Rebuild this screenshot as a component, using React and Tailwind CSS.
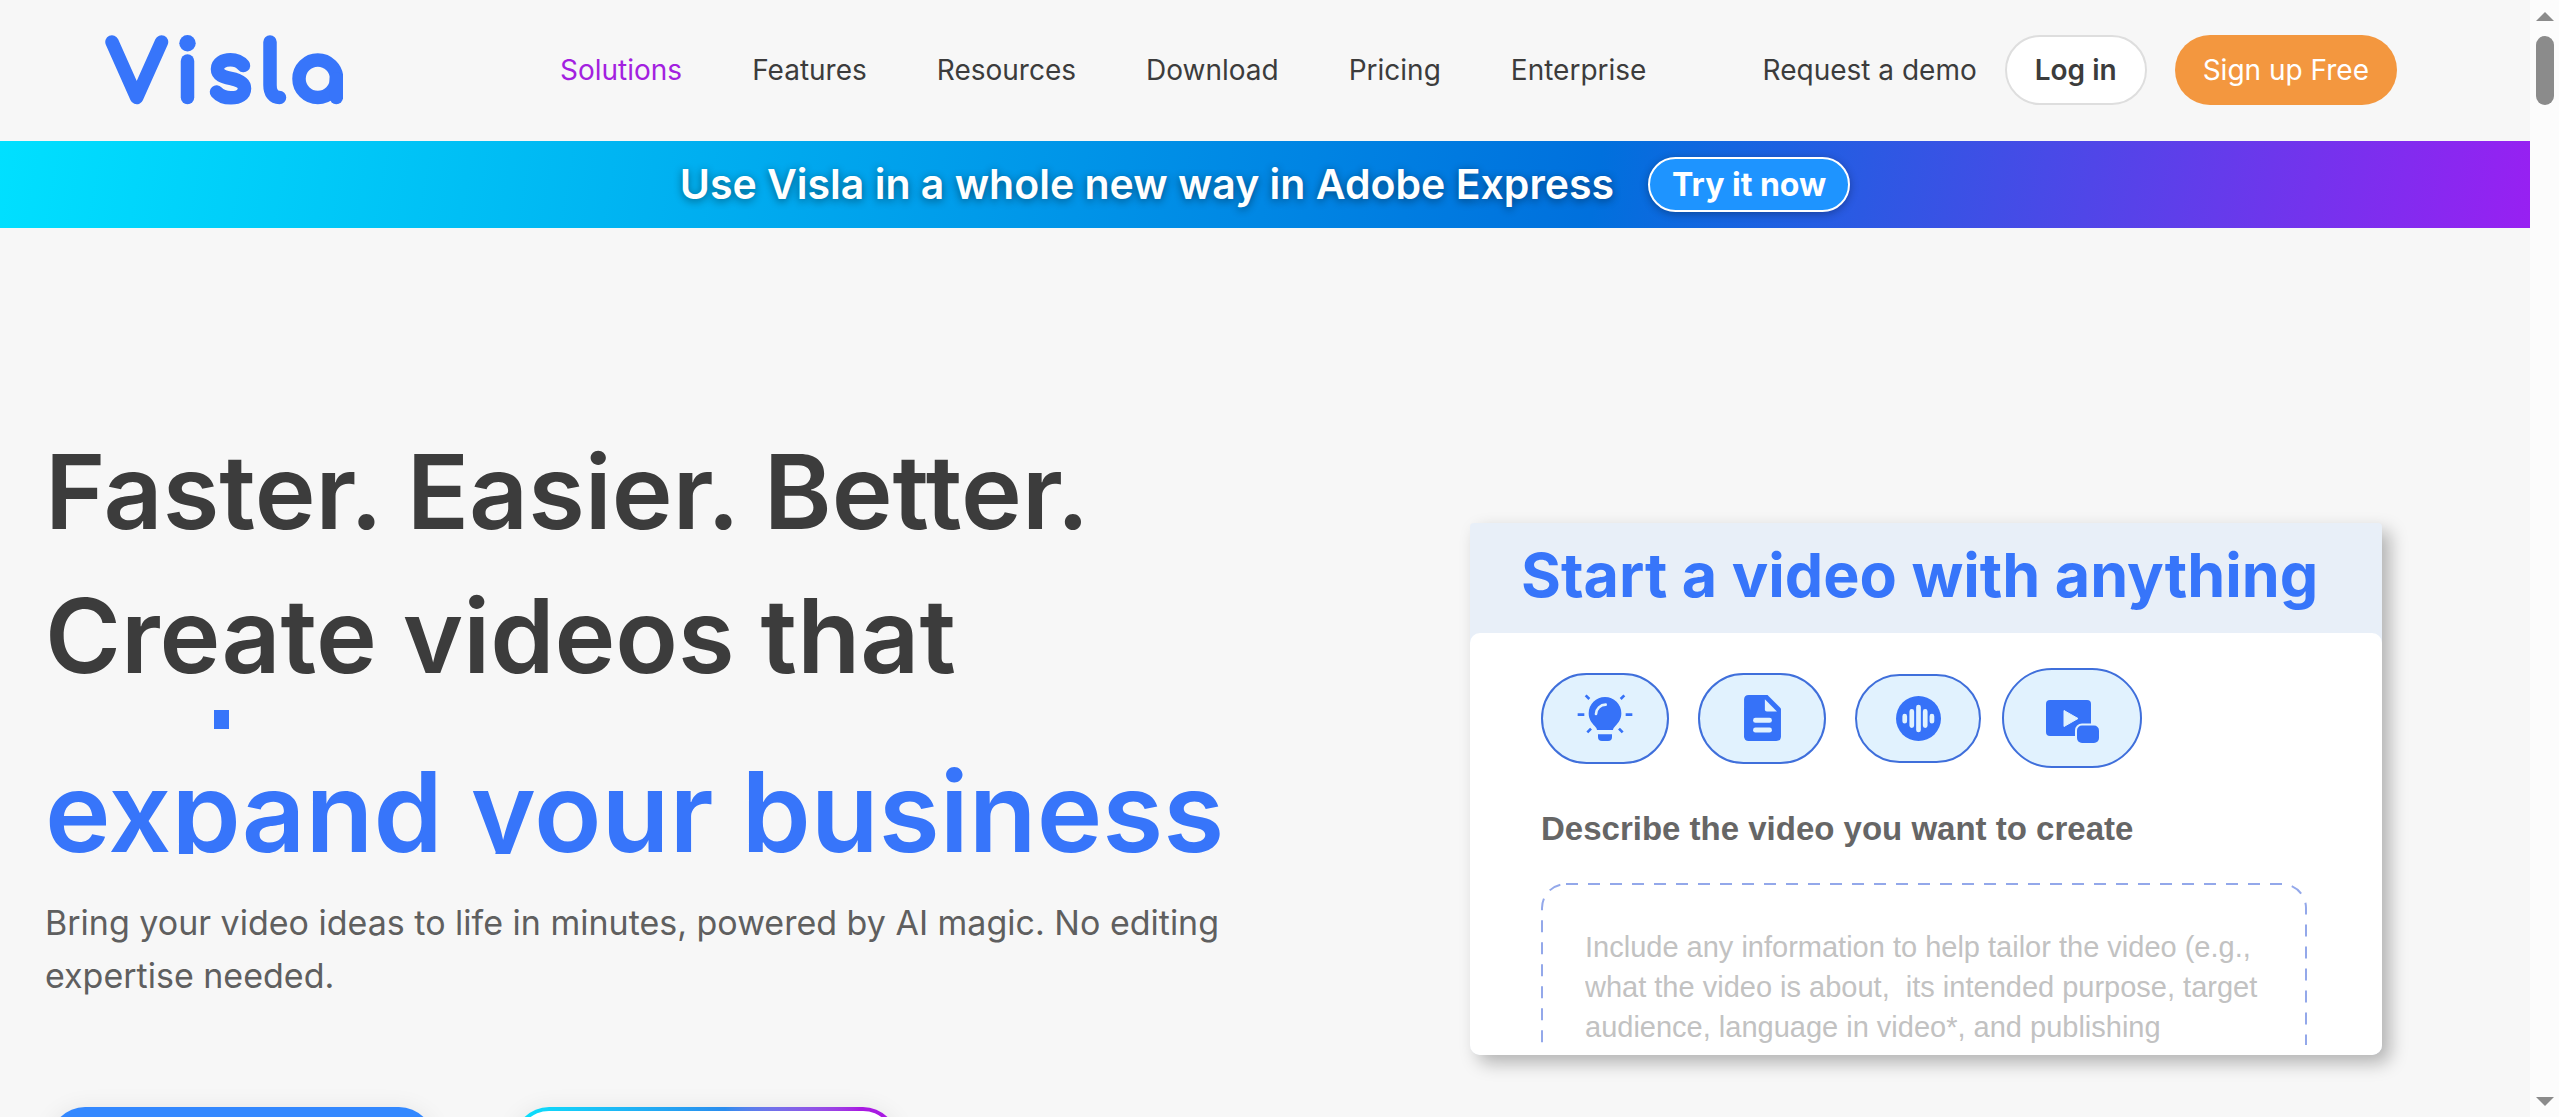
import React from 'react';

const NAV_LINKS = ['Solutions', 'Features', 'Resources', 'Download', 'Pricing', 'Enterprise'];

export default function App() {
  return (
    <div className="flex h-screen overflow-hidden bg-[#f7f7f7] font-['Inter',sans-serif] text-[#3c3c3c]">
      <div className="flex-1 min-w-0 h-full overflow-hidden">
        <Header />
        <PromoBanner />
        <Hero />
      </div>
      <ScrollRail />
    </div>
  );
}

function Header() {
  return (
    <header className="flex items-center h-[141px] pb-0.5 pl-[105px] pr-[133px] text-[28px] leading-10 whitespace-nowrap">
      <a href="#home" aria-label="Visla" className="shrink-0">
        <VislaLogo />
      </a>
      <nav className="flex gap-[70px] ml-[217px]">
        {NAV_LINKS.map((label) => (
          <a key={label} href={`#${label.toLowerCase()}`} className={label === 'Solutions' ? 'text-[#a31fe0]' : ''}>
            {label}
          </a>
        ))}
      </nav>
      <div className="flex items-center gap-7 ml-auto">
        <a href="#demo">Request a demo</a>
        <button className="h-[70px] px-7 rounded-full border-2 border-[#dedede] bg-white font-semibold">Log in</button>
        <button className="h-[70px] px-7 rounded-full bg-[#f3973f] text-white">Sign up Free</button>
      </div>
    </header>
  );
}

function PromoBanner() {
  return (
    <div className="flex items-center justify-center gap-[34px] h-[87px] text-white whitespace-nowrap bg-[linear-gradient(100deg,#00e0ff,#0070dd_63%,#9820f2)]">
      <p className="pb-0.5 text-[41px] leading-12 font-semibold [text-shadow:0_2px_8px_rgb(0_0_0/0.45)]">
        Use Visla in a whole new way in Adobe Express
      </p>
      <button className="h-[55px] px-[22px] rounded-full border-2 border-white bg-[#1e94ff] text-[32px] leading-12 font-bold shadow-[0_2px_8px_rgb(0_0_0/0.3)]">
        Try it now
      </button>
    </div>
  );
}

function Hero() {
  return (
    <main className="grid grid-cols-2">
      <section className="pt-48 pl-[45px]">
        <h1 className="text-[103px] leading-36 font-semibold whitespace-nowrap">
          Faster. Easier. Better.
          <br />
          Create videos that
          {/* Rolling phrase, caught while one line slides out and the next slides in */}
          <span className="relative block h-36 mt-0.5 overflow-hidden text-[111px] leading-51 text-[#3775fa]">
            <span className="absolute left-[169px] top-0 w-[15px] h-[19px] bg-[#3775fa]" />
            expand your business
          </span>
        </h1>
        <p className="mt-[42px] text-[34px] leading-[53px] text-[#5f5f5f]">
          Bring your video ideas to life in minutes, powered by AI magic. No editing expertise needed.
        </p>
        <div className="flex gap-20 mt-[105px] pl-[5px]">
          <button aria-label="Sign up Free" className="w-96 h-[84px] rounded-[35px] bg-[#3388ff] shadow-[0_2px_24px_rgb(0_0_0/0.08)]" />
          <button
            aria-label="Request a demo"
            className="w-96 h-[84px] p-1 rounded-[35px] bg-linear-to-r from-[#08e2fb] via-[#2a8cee] via-55% to-[#a81ae2] to-90% shadow-[0_2px_24px_rgb(0_0_0/0.08)]"
          >
            <span className="block h-full rounded-[31px] bg-white" />
          </button>
        </div>
      </section>

      <section className="flex justify-end items-start pt-[295px] pr-[148px]">
        <StartCard />
      </section>
    </main>
  );
}

function StartCard() {
  return (
    <div className="w-[912px] rounded-b-[10px] rounded-t-sm bg-[#e8eff8] shadow-[8px_8px_18px_rgb(0_0_0/0.28)]">
      <h2 className="h-[110px] pl-[51px] text-[61px] leading-26 font-bold text-[#3775fa] whitespace-nowrap">
        Start a video with anything
      </h2>
      <div className="h-[422px] pt-[35px] px-[71px] rounded-[10px] bg-white font-['Liberation_Sans',sans-serif]">
        <div className="flex items-center gap-[21px]">
          <div className="flex items-center gap-[29px]">
            <SourceButton label="Idea" size="w-32 h-[91px]"><IdeaIcon /></SourceButton>
            <SourceButton label="Document" size="w-32 h-[91px]"><DocumentIcon /></SourceButton>
            <SourceButton label="Audio" size="w-[126px] h-[89px]"><AudioIcon /></SourceButton>
          </div>
          <SourceButton label="Video" size="w-[140px] h-[100px]"><VideoIcon /></SourceButton>
        </div>
        <label htmlFor="prompt" className="block mt-[41px] text-[33px] leading-10 font-bold text-[#666]">
          Describe the video you want to create
        </label>
        <div className="relative h-[162px] mt-[34px] pt-11 pl-11 overflow-hidden">
          <svg className="absolute inset-0 w-full h-full" fill="none">
            <rect x="1" y="1" width="764" height="300" rx="24" stroke="#93a8ea" strokeWidth="2" strokeDasharray="12 10" />
          </svg>
          <textarea
            id="prompt"
            rows={3}
            placeholder="Include any information to help tailor the video (e.g., what the video is about,  its intended purpose, target audience, language in video*, and publishing"
            className="relative block w-[690px] h-30 resize-none overflow-hidden text-[29px] leading-10 outline-none placeholder:text-[#c2c2c2]"
          />
        </div>
      </div>
    </div>
  );
}

function SourceButton({ label, size, children }) {
  return (
    <button
      aria-label={label}
      className={`flex items-center justify-center shrink-0 rounded-full border-2 border-[#3f6fdb] bg-[#e1f2fe] ${size}`}
    >
      {children}
    </button>
  );
}

function IdeaIcon() {
  return (
    <svg width="56" height="48" viewBox="0 0 168 144" fill="none">
      <path
        d="M84 9a49 49 0 0 0-49 49c0 17 8 28 18 38 5 5 6 8 7 12h48c1-4 2-7 7-12 10-10 18-21 18-38A49 49 0 0 0 84 9Z"
        fill="#3672f8"
      />
      <path d="M63 121h42v8q0 12-12 12H75q-12 0-12-12Z" fill="#3672f8" />
      <path d="M57 60A29 29 0 0 1 86 32" stroke="#e1f2fe" strokeWidth="8" strokeLinecap="round" />
      <path
        d="M2 62H22M146 62H166M26 4L37 15M142 4L131 15M42 104L31 115M126 104L137 115"
        stroke="#3672f8"
        strokeWidth="8"
      />
    </svg>
  );
}

function DocumentIcon() {
  return (
    <svg width="37" height="46" viewBox="0 0 110 137">
      <path d="M14 0H70L110 40V123Q110 137 96 137H14Q0 137 0 123V14Q0 0 14 0Z" fill="#3672f8" />
      <path d="M62 13V43Q62 49 68 49H98Z" fill="#e1f2fe" />
      <rect x="27" y="68" width="56" height="15" rx="7" fill="#e1f2fe" />
      <rect x="27" y="97" width="56" height="15" rx="7" fill="#e1f2fe" />
    </svg>
  );
}

function AudioIcon() {
  return (
    <svg width="45" height="45" viewBox="0 0 134 134">
      <circle cx="67" cy="67" r="67" fill="#3672f8" />
      <path
        d="M26 60V75M47 46V88M67 33V101M87 46V88M107 60V75"
        stroke="#e1f2fe"
        strokeWidth="14"
        strokeLinecap="round"
      />
    </svg>
  );
}

function VideoIcon() {
  return (
    <svg width="53" height="50" viewBox="0 -7 53 50">
      <rect width="45" height="36" rx="4" fill="#3672f8" />
      <path d="M18 10.5L32 18.5L18 26.5Z" fill="#e1f2fe" stroke="#e1f2fe" strokeLinejoin="round" />
      <rect x="29" y="23.5" width="26" height="21" rx="7" fill="#e1f2fe" />
      <rect x="31" y="25.5" width="22" height="17.5" rx="5" fill="#3672f8" />
    </svg>
  );
}

function VislaLogo() {
  return (
    <svg width="238" height="70" viewBox="0 0 238 70" fill="none" stroke="#3775fa" strokeWidth="13.5" strokeLinecap="round" strokeLinejoin="round">
      <path d="M7 7L31.7 62.5L56.5 7" />
      <path d="M82.5 26V62.5" />
      <circle cx="82.5" cy="8.2" r="8.2" fill="#3775fa" stroke="none" />
      <path d="M138.5 30.5C135 26.5 130 24.8 125.5 24.8C118 24.8 112.5 28.5 112.5 34C112.5 40 118 41.8 125.5 43.3C134 45 139.5 48 139.5 53.5C139.5 59.5 134 62.8 126 62.8C119.5 62.8 114.5 60.5 111.5 57" />
      <path d="M165 7V50C165 58 168.5 62.5 174.5 62.5" />
      <circle cx="212.8" cy="43.7" r="18.8" />
      <path d="M231.3 43.7V62.5" />
    </svg>
  );
}

function ScrollRail() {
  return (
    <div className="flex flex-col items-center w-[29px] h-full pt-3 pb-[11px] bg-[#fcfcfc]">
      <svg width="18" height="9" viewBox="0 0 18 9" fill="#8b8b8b"><path d="M9 0L18 9H0Z" /></svg>
      <div className="w-[18px] h-[69px] mt-[15px] rounded-full bg-[#8b8b8b]" />
      <svg width="18" height="9" viewBox="0 0 18 9" fill="#8b8b8b" className="mt-auto"><path d="M0 0H18L9 9Z" /></svg>
    </div>
  );
}
